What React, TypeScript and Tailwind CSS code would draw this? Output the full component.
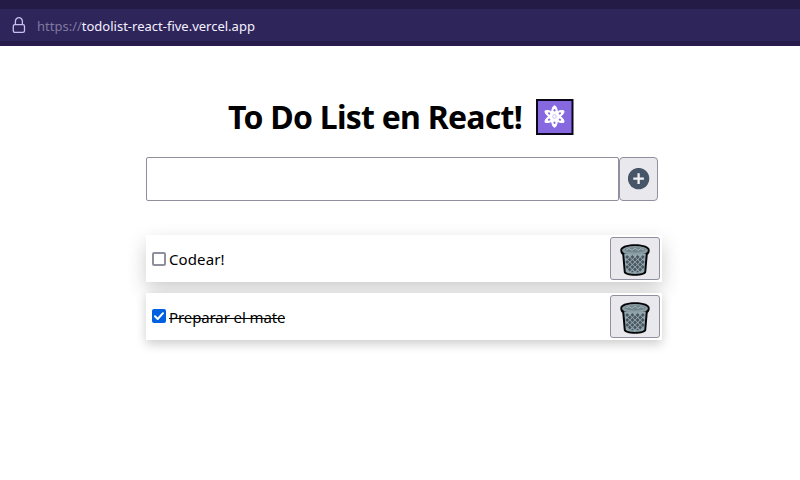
import React, { useState } from "react";

type Todo = { id: number; text: string; done: boolean };

function LockIcon() {
  return (
    <svg width="14" height="18" viewBox="0 0 14 18" fill="none" stroke="#cbbfee" strokeWidth="1.3" className="mt-0.5">
      <rect x="1.3" y="7.6" width="11.2" height="7.800" rx="1.6" />
      <path d="M3.400 7.600V4.200a3.500 3.500 0 0 1 7 0v3.400" />
    </svg>
  );
}

function AtomIcon() {
  return (
    <svg width="38" height="36" viewBox="0 0 38 36">
      <rect width="37.500" height="36" fill="#0b0618" />
      <rect x="2" y="2" width="33.5" height="32" fill="#8669e0" />
      <g fill="#fff" stroke="#fff" strokeWidth="1">
        <ellipse cx="18.5" cy="17.5" rx="3.300" ry="10.800" />
        <ellipse cx="18.5" cy="17.5" rx="3.300" ry="10.800" transform="rotate(60 18.5 17.5)" />
        <ellipse cx="18.5" cy="17.5" rx="3.300" ry="10.800" transform="rotate(120 18.5 17.5)" />
      </g>
      <g fill="#8669e0">
        {[0, 60, 120, 180, 240, 300].map((angle) => (
          <ellipse key={angle} cx="18.5" cy="11.300" rx="1" ry="1.200" transform={`rotate(${angle} 18.5 17.5)`} />
        ))}
      </g>
      <circle cx="18.5" cy="17.5" r="1.8" fill="none" stroke="#c5b6f5" strokeWidth=".9" />
    </svg>
  );
}

function PlusIcon() {
  return (
    <svg width="22" height="22" viewBox="0 0 22 22" className="mb-px">
      <circle cx="10.6" cy="10.600" r="10.7" fill="#475569" />
      <path d="M10.600 5.300v10.600M5.300 10.600h10.600" stroke="#f1f0f5" strokeWidth="2.3" />
    </svg>
  );
}

function TrashIcon() {
  return (
    <svg width="30" height="32" viewBox="0 0 30 32">
      <path
        d="M.3 6.200C.3 2.500 6.200.3 15 .3s14.700 2.200 14.700 5.900c0 2-.8 3.600-2 4.500l-1.500 17.500c-.5 2.300-5 3.500-11.200 3.500S4.300 30.500 3.800 28.200L2.300 10.700C1.100 9.800.3 8.200.3 6.200z"
        fill="#050608"
      />
      <path d="M4.200 9.500h21.600l-1.500 18c-.5 1.500-4.500 2.400-9.300 2.400s-8.800-.9-9.300-2.400z" fill="#94a8b1" />
      <g fill="#4a565f">
        {[13, 18, 23].map((y) =>
          [7.2, 12.4, 17.6, 22.8].map((x) => (
            <path key={`${x}-${y}`} d={`M${x} ${y - 1.900}l1.900 1.900-1.900 1.900-1.900-1.900z`} />
          )),
        )}
        {[15.5, 20.5, 25.5].map((y) =>
          [9.8, 15, 20.2].map((x) => (
            <path key={`${x}-${y}`} d={`M${x} ${y - 1.900}l1.900 1.900-1.900 1.900-1.900-1.900z`} />
          )),
        )}
        <path d="M12.400 26.500l1.700 1.700h-3.400zM17.600 26.500l1.700 1.700h-3.400z" />
      </g>
      <ellipse cx="15" cy="6.400" rx="12.900" ry="4.300" fill="#8b9da4" />
      <ellipse cx="15" cy="5.900" rx="10.500" ry="2.600" fill="#71838b" />
      <path
        d="M6 6l3-1.500 3 2 3-2.500 3 2.500 3-2 3 1.500"
        fill="none"
        stroke="#a4b4ba"
        strokeWidth="1"
      />
    </svg>
  );
}

function TodoRow({ todo, onToggle, onDelete }: { todo: Todo; onToggle: () => void; onDelete: () => void }) {
  const shadow = todo.done
    ? "shadow-[0_4px_10px_rgba(0,0,0,0.2)]"
    : "shadow-[0_8px_20px_rgba(0,0,0,0.2)]";
  return (
    <li className={`flex h-[47px] items-center bg-white pr-0.5 pl-1.5 ${shadow}`}>
      <button
        role="checkbox"
        aria-checked={todo.done}
        aria-label={todo.text}
        onClick={onToggle}
        className={`mr-[3px] grid size-3.5 place-items-center rounded-[2px] ${
          todo.done ? "mb-px bg-[#0060df]" : "border-2 border-[#8f8f9d] bg-white"
        }`}
      >
        {todo.done && (
          <svg width="14" height="14" viewBox="0 0 14 14" fill="none" stroke="#fff" strokeWidth="2">
            <path d="M3 7.300l2.700 2.700L11 4.200" strokeLinecap="round" strokeLinejoin="round" />
          </svg>
        )}
      </button>
      <span
        className={`text-[15px] leading-5 whitespace-nowrap ${
          todo.done
            ? "bg-[linear-gradient(#000,#000)] bg-[length:100%_1px] bg-[position:0_11px] bg-no-repeat tracking-[-0.1px]"
            : "tracking-[0.1px]"
        }`}
      >
        {todo.text}
      </span>
      <button
        aria-label="Eliminar"
        onClick={onDelete}
        className="ml-auto grid h-[43px] w-[50px] place-items-center rounded-[3px] border border-[#8f8f9d] bg-[#e9e9ed] pt-0.5"
      >
        <TrashIcon />
      </button>
    </li>
  );
}

export default function App() {
  const [value, setValue] = useState("");
  const [todos, setTodos] = useState<Todo[]>([
    { id: 1, text: "Codear!", done: false },
    { id: 2, text: "Preparar el mate", done: true },
  ]);

  const addTodo = (event: React.FormEvent) => {
    event.preventDefault();
    if (!value.trim()) return;
    setTodos([...todos, { id: Date.now(), text: value, done: false }]);
    setValue("");
  };

  return (
    <div className="h-[480px] w-[800px] overflow-hidden bg-white font-['Noto_Sans',sans-serif] text-black">
      <header className="flex h-[46px] items-center border-t-9 border-b-5 border-t-[#251b47] border-b-[#271c4b] bg-[#2e255b] pl-3">
        <LockIcon />
        <span className="ml-[11px] pt-1 text-[13px] tracking-[0px] whitespace-nowrap text-[#f5f1ff]">
          <span className="text-[#81799f]">https://</span>todolist-react-five.vercel.app
        </span>
      </header>
      <main className="pt-[47px]">
        <div className="ml-[228px] flex h-12 items-center">
          <h1 className="w-[308px] text-[32px] leading-12 font-bold tracking-[-0.75px] whitespace-nowrap">
            To Do List en React!
          </h1>
          <AtomIcon />
        </div>
        <form onSubmit={addTodo} className="mt-4 ml-[146px] flex h-11">
          <input
            aria-label="Nueva tarea"
            value={value}
            onChange={(event) => setValue(event.target.value)}
            className="w-[473px] rounded-[2px] border border-[#8f8f9d] px-2 outline-none"
          />
          <button
            aria-label="Agregar"
            className="grid w-[39px] place-items-center rounded-[4px] border border-[#8f8f9d] bg-[#e9e9ed]"
          >
            <PlusIcon />
          </button>
        </form>
        <ul className="mt-[34px] ml-[146px] flex w-[516px] flex-col gap-[11px]">
          {todos.map((todo) => (
            <TodoRow
              key={todo.id}
              todo={todo}
              onToggle={() => setTodos(todos.map((t) => (t.id === todo.id ? { ...t, done: !t.done } : t)))}
              onDelete={() => setTodos(todos.filter((t) => t.id !== todo.id))}
            />
          ))}
        </ul>
      </main>
    </div>
  );
}
